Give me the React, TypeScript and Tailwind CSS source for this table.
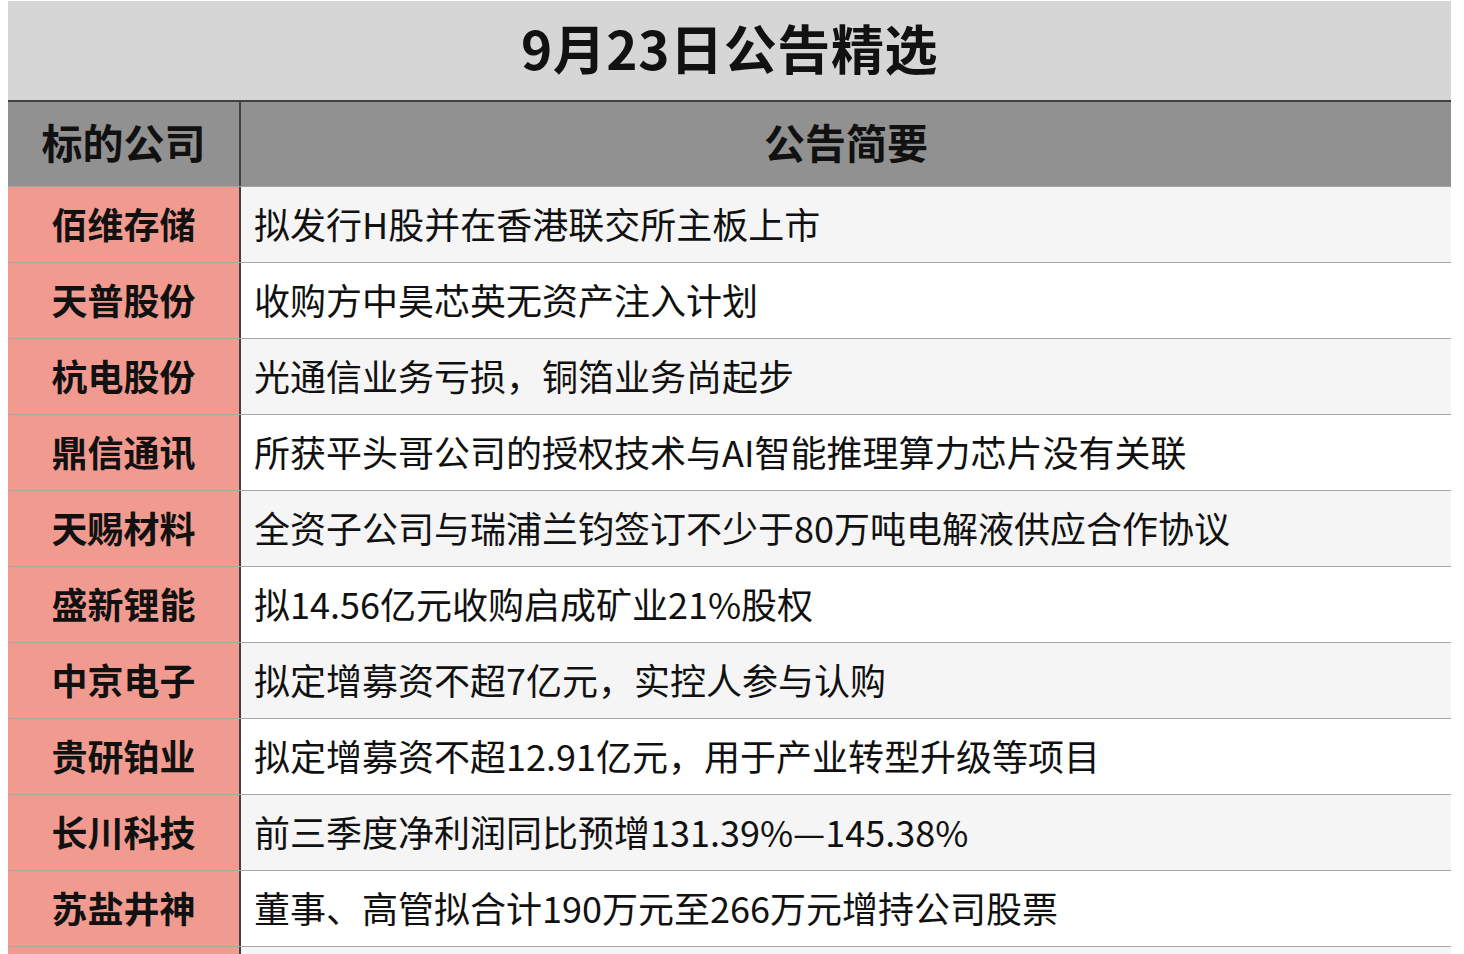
const rows: [string, string][] = [
  ["佰维存储", "拟发行H股并在香港联交所主板上市"],
  ["天普股份", "收购方中昊芯英无资产注入计划"],
  ["杭电股份", "光通信业务亏损，铜箔业务尚起步"],
  ["鼎信通讯", "所获平头哥公司的授权技术与AI智能推理算力芯片没有关联"],
  ["天赐材料", "全资子公司与瑞浦兰钧签订不少于80万吨电解液供应合作协议"],
  ["盛新锂能", "拟14.56亿元收购启成矿业21%股权"],
  ["中京电子", "拟定增募资不超7亿元，实控人参与认购"],
  ["贵研铂业", "拟定增募资不超12.91亿元，用于产业转型升级等项目"],
  ["长川科技", "前三季度净利润同比预增131.39%—145.38%"],
  ["苏盐井神", "董事、高管拟合计190万元至266万元增持公司股票"],
  ["", ""],
];

export default function App() {
  return (
    <div
      className="min-h-screen bg-white pt-px"
      style={{ fontFamily: '"Noto Sans CJK SC", "Noto Sans", sans-serif' }}
    >
      <div className="ml-2 w-[1443px] text-[#111]">
        <div className="flex h-[101px] items-center justify-center border-b-2 border-[#404040] bg-[#d6d6d6] pb-[6px]">
          <h1 className="text-[53px] font-bold leading-none tracking-[0.6px]">9月23日公告精选</h1>
        </div>

        <div className="grid h-[85px] grid-cols-[233px_1fr] border-b border-[#a3a3a3] bg-[#919191]">
          <div className="flex items-center justify-center border-r-2 border-[#404040] pb-[4px] text-[41px] font-bold">
            标的公司
          </div>
          <div className="flex items-center justify-center pb-[4px] text-[41px] font-bold">公告简要</div>
        </div>

        {rows.map(([name, text], i) => (
          <div
            key={i}
            className={`grid h-[76px] grid-cols-[233px_1fr] border-b border-[#a8a8a8] ${
              i % 2 === 0 ? "bg-[#f5f5f5]" : "bg-white"
            }`}
          >
            <div className="flex items-center justify-center border-r-2 border-[#404040] bg-[#f19b90] pb-[4px] text-[36px] font-bold">
              {name}
            </div>
            <div className="flex items-center pb-[4px] pl-[13px] text-[36px] leading-none">{text}</div>
          </div>
        ))}
      </div>
    </div>
  );
}
